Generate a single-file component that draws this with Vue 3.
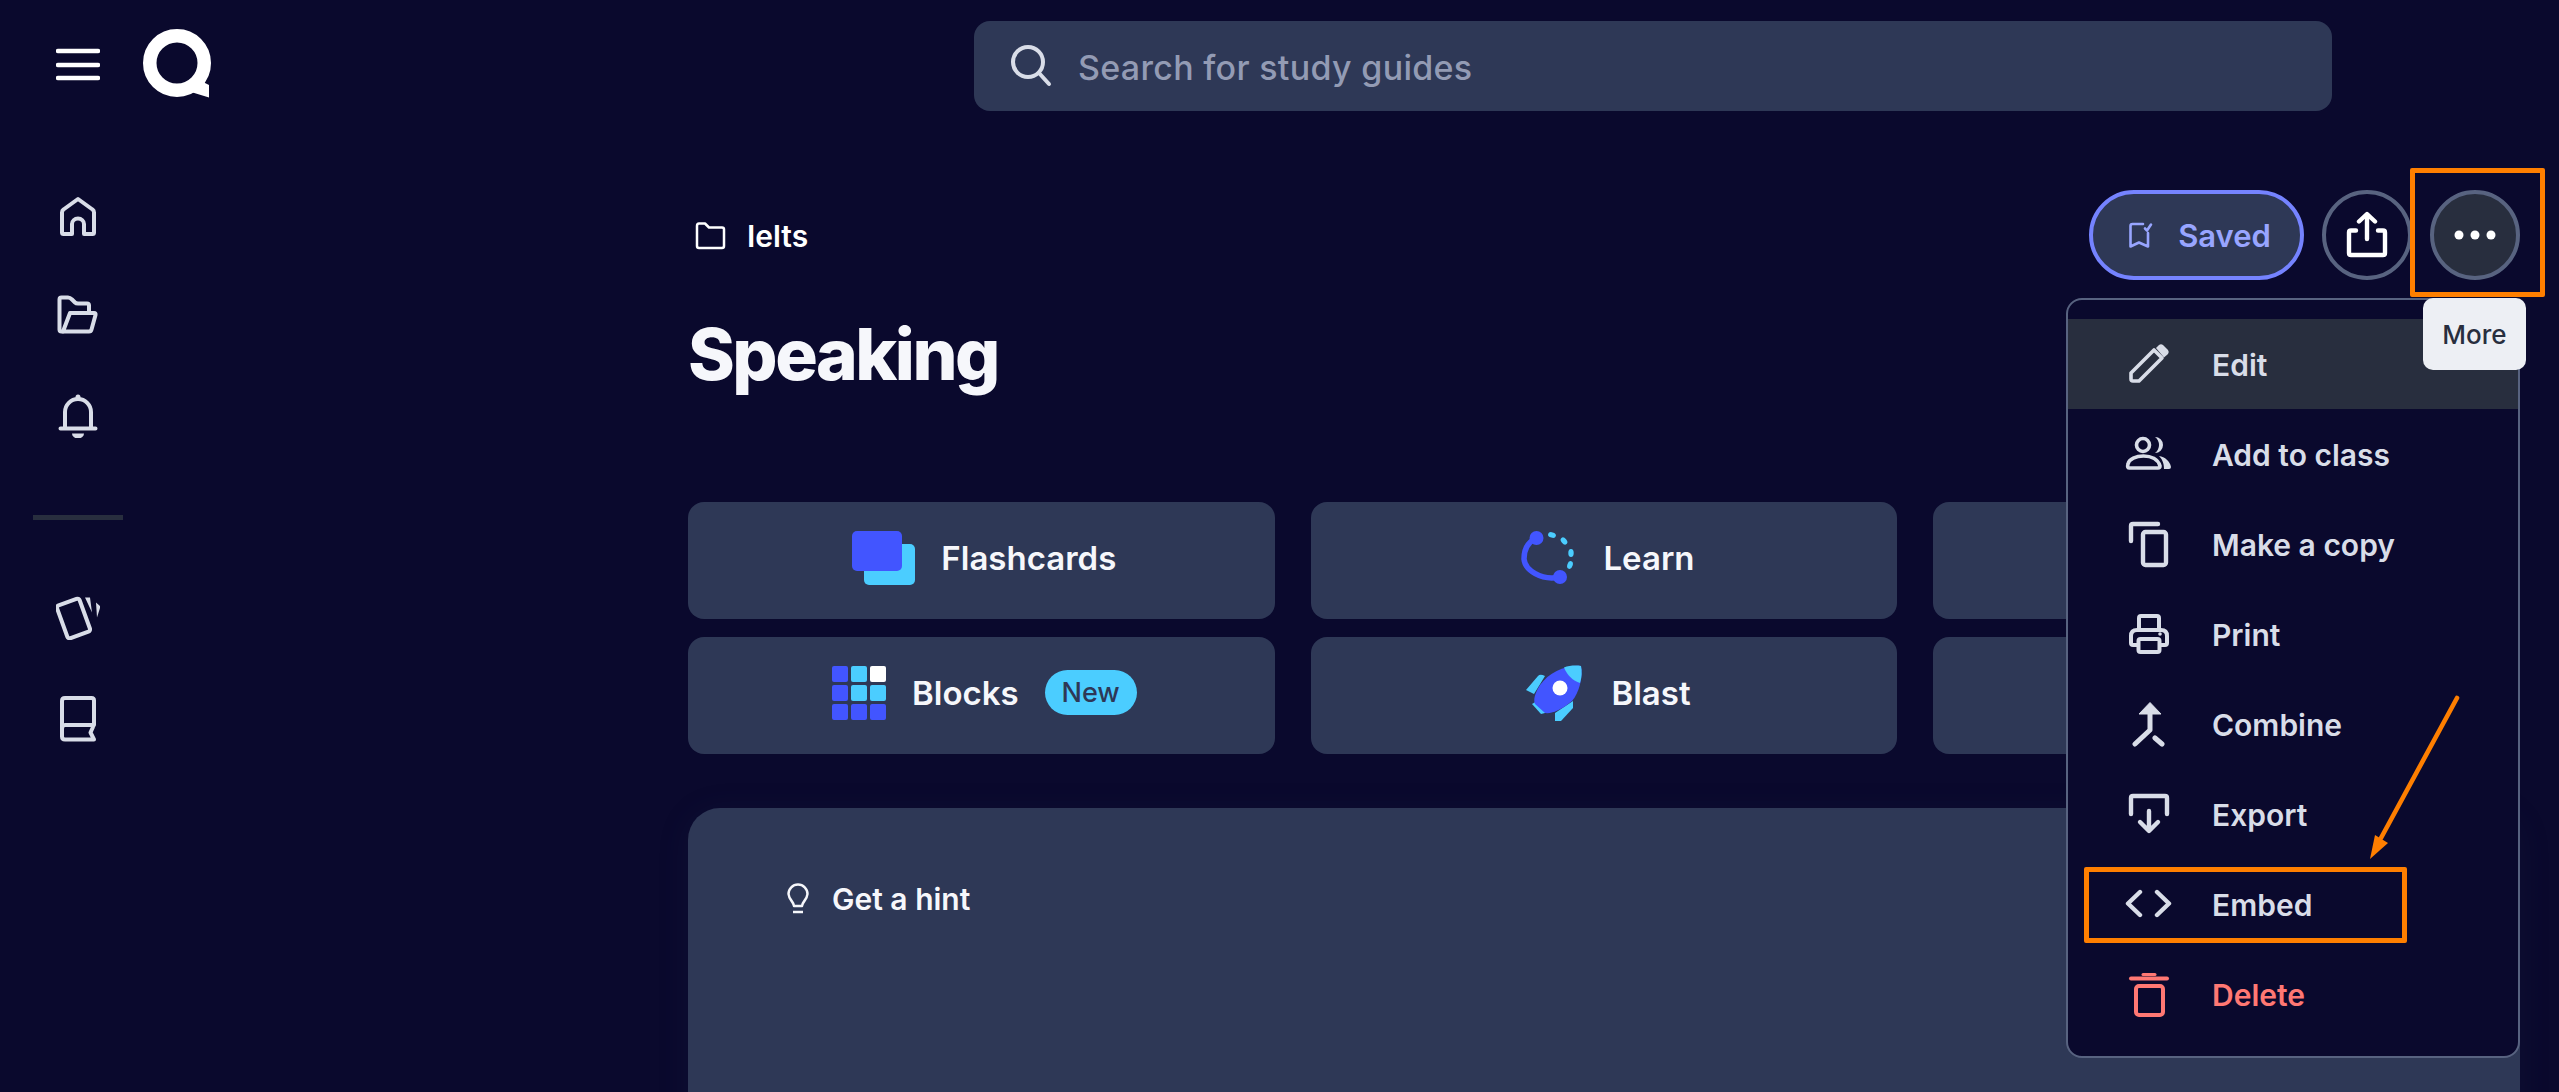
<script setup>
const blockCells = ['b', 'c', 'w', 'b', 'c', 'c', 'b', 'b', 'b']
</script>

<template>
  <div class="page">
    <header class="topbar">
      <svg class="burger" width="44" height="44" viewBox="0 0 44 44"><path d="M2 8H42M2 22H42M2 35H42" fill="none" stroke="#fff" stroke-width="4.4" stroke-linecap="round"/></svg>
      <svg class="logo" width="72" height="72" viewBox="0 0 72 72"><circle cx="36" cy="36" r="27.25" fill="none" stroke="#fff" stroke-width="13.5"/><path d="M50 65L68 70.5V58L64 56 60 48Z" fill="#fff"/></svg>
      <div class="search">
        <svg width="44" height="44" viewBox="0 0 44 44"><circle cx="18" cy="18" r="15" fill="none" stroke="#d9dde8" stroke-width="4"/><path d="M29 29L39 40" stroke="#d9dde8" stroke-width="4" stroke-linecap="round"/></svg>
        <span>Search for study guides</span>
      </div>
    </header>

    <div class="layout">
      <nav class="sidebar">
        <div class="slot">
          <svg width="44" height="44" viewBox="0 0 44 44" class="nav-icon"><path d="M22 4L7.5 14.5Q6 15.5 6 17.5V37.5Q6 39 7.5 39H16V29A6 5.5 0 0 1 28 29V39H36.5Q38 39 38 37.5V17.5Q38 15.5 36.5 14.5Z"/></svg>
        </div>
        <div class="slot">
          <svg width="44" height="44" viewBox="0 0 44 44" class="nav-icon"><path d="M7 37.5H5.5Q3.5 37.5 3.5 35.5V5.5Q3.5 3.5 5.5 3.5H12Q14 3.5 16 5.5L19 8.5Q20 9.5 22 9.5H31Q33 9.5 33 11.5V17"/><path d="M14 19H38Q40 19 39.5 21L35.5 35.5Q35 37.5 33 37.5H7Z"/></svg>
        </div>
        <div class="slot">
          <svg width="44" height="44" viewBox="0 0 44 44" class="nav-icon"><path d="M4.5 34.5H39.5M9 34.5V18A13 13 0 0 1 35 18V34.5"/><circle cx="22" cy="3" r="2.5" fill="#d9dde8" stroke="none"/><path d="M16 39.5H28A6 5 0 0 1 16 39.5Z" fill="#d9dde8" stroke="none"/></svg>
        </div>
        <div class="divider"></div>
        <div class="slot">
          <svg width="44" height="44" viewBox="0 0 44 44" class="nav-icon"><rect x="5.5" y="5" width="24" height="35" rx="2.5" transform="rotate(-20 17.5 22.5)"/><path d="M29 1.5L34 1.5 36 16.5ZM40 6.5L44.5 10.5 41 21.5Z" fill="#d9dde8" stroke="none"/></svg>
        </div>
        <div class="slot">
          <svg width="44" height="48" viewBox="0 0 44 48" class="nav-icon book"><path d="M9 31H38V6.5Q38 4 35.5 4H9Q6 4 6 7V42.5Q6 45.5 9 45.5H38L34.5 38.5 37 33M6 35Q6 31 9 31"/></svg>
        </div>
      </nav>

      <main class="content">
        <section class="head">
          <div class="head-left">
            <div class="crumb">
              <svg width="36" height="32" viewBox="0 0 36 32"><path d="M4 6Q4 3.5 6 3.5H12L16 7.5H29Q31 7.5 31 9.5V26Q31 28 29 28H6Q4 28 4 26Z" fill="none" stroke="#fff" stroke-width="2.5" stroke-linejoin="round"/></svg>
              <span>Ielts</span>
            </div>
            <h1>Speaking</h1>
          </div>

          <div class="actions">
            <button class="saved">
              <svg width="28" height="30" viewBox="0 0 28 30"><path d="M15 4H4.5Q2.5 4 2.5 6V26.5L11 22.5 20 26.5V13M17 8.5L19 10.5 23 4.5" fill="none" stroke="#98a5ff" stroke-width="2.6" stroke-linejoin="round" stroke-linecap="round"/></svg>
              <span>Saved</span>
            </button>
            <button class="round">
              <svg width="44" height="48" viewBox="0 0 44 48"><path d="M11 19.5H6Q4 19.5 4 21.5V42Q4 44 6 44H38Q40 44 40 42V21.5Q40 19.5 38 19.5H33M22 28V4M14 10.5L22 3 30 10.5" fill="none" stroke="#fff" stroke-width="4.4" stroke-linecap="round" stroke-linejoin="round"/></svg>
            </button>
            <button class="round more">
              <svg width="44" height="12" viewBox="0 0 44 12"><circle cx="6" cy="6" r="4.5" fill="#fff"/><circle cx="22" cy="6" r="4.5" fill="#fff"/><circle cx="38" cy="6" r="4.5" fill="#fff"/></svg>
            </button>

            <div class="menu">
              <div class="item active">
                <svg width="44" height="44" viewBox="0 0 44 44"><path d="M4 37V31L27 8 35 16 12 39H6Q4 39 4 37Z" fill="none" stroke="#d9dde8" stroke-width="3.6" stroke-linejoin="round"/><path d="M29 6L32 3Q34 1.5 36 3L41 8Q42.5 10 41 12L37 15.5Z" fill="#d9dde8"/></svg>
                <span>Edit</span>
              </div>
              <div class="item">
                <svg width="50" height="38" viewBox="0 0 50 38"><circle cx="19" cy="10" r="6.5" fill="none" stroke="#d9dde8" stroke-width="3.6"/><path d="M31 2A8 8 0 0 1 31 18 10 10 0 0 0 31 2Z" fill="#d9dde8"/><path d="M4 29C5 24 12 21 19.5 21 27 21 34 24 36 31Q36 33 34 33H5Q3 33 4 29Z" fill="none" stroke="#d9dde8" stroke-width="3.6" stroke-linejoin="round"/><path d="M35 21C41 22 46 26 47 32Q47 34 45 34H40C40 28 38 24 35 21Z" fill="#d9dde8"/></svg>
                <span>Add to class</span>
              </div>
              <div class="item">
                <svg width="44" height="48" viewBox="0 0 44 48" fill="none" stroke="#d9dde8" stroke-width="4.4" stroke-linecap="round"><path d="M4 21V6Q4 4 6 4H31"/><rect x="16" y="12" width="23" height="33" rx="2.5"/></svg>
                <span>Make a copy</span>
              </div>
              <div class="item">
                <svg width="44" height="44" viewBox="0 0 44 44" fill="none" stroke="#d9dde8" stroke-width="4" stroke-linejoin="round"><path d="M12 33H6Q4 33 4 31V24Q4 18 10 18H34Q40 18 40 24V31Q40 33 38 33H32"/><path d="M12 17V6Q12 4 14 4H30Q32 4 32 6V17"/><rect x="11.5" y="27" width="21" height="13" rx="2"/><circle cx="33" cy="22" r="1.8" fill="#d9dde8" stroke="none"/></svg>
                <span>Print</span>
              </div>
              <div class="item">
                <svg width="44" height="46" viewBox="0 0 44 46"><path d="M23 1.5L34 13H12Z" fill="#d9dde8" stroke="#d9dde8" stroke-linejoin="round"/><path d="M23 13V29L8 43M28 37L35 43" fill="none" stroke="#d9dde8" stroke-width="5" stroke-linecap="round" stroke-linejoin="round"/></svg>
                <span>Combine</span>
              </div>
              <div class="item">
                <svg width="44" height="44" viewBox="0 0 44 44" fill="none" stroke="#d9dde8" stroke-width="4.4" stroke-linecap="round" stroke-linejoin="round"><path d="M4 22V6Q4 4 6 4H38Q40 4 40 6V22"/><path d="M22 19V38M13 30L22 39 31 30"/></svg>
                <span>Export</span>
              </div>
              <div class="item">
                <svg width="50" height="30" viewBox="0 0 50 30" fill="none" stroke="#d9dde8" stroke-width="4.4" stroke-linecap="round" stroke-linejoin="round"><path d="M16 3L4 14.5 16 26M33 3L45 14.5 33 26"/></svg>
                <span>Embed</span>
              </div>
              <div class="item danger">
                <svg width="44" height="48" viewBox="0 0 44 48" fill="none" stroke="#ff7873" stroke-width="4" stroke-linecap="round"><path d="M4 8.5H40"/><path d="M16 4.5H28" stroke-width="3"/><rect x="9" y="16" width="27" height="29" rx="3"/></svg>
                <span>Delete</span>
              </div>
            </div>

            <div class="tooltip">More</div>
            <div class="mark mark-more"></div>
          </div>
        </section>

        <section class="tiles">
          <div class="tile">
            <svg width="63" height="54" viewBox="0 0 63 54"><rect x="12" y="13" width="51" height="41" rx="5" fill="#4bcdff"/><rect width="50" height="40" rx="5" fill="#4255ff"/></svg>
            <span>Flashcards</span>
          </div>
          <div class="tile">
            <svg width="58" height="58" viewBox="0 0 58 58"><path d="M17.5 9C9 13 5 21 5 30 6 41 22 52 41 48" fill="none" stroke="#4255ff" stroke-width="5.5"/><circle cx="17.5" cy="9" r="7" fill="#4255ff"/><circle cx="41" cy="48" r="7" fill="#4255ff"/><ellipse cx="33" cy="6" rx="4" ry="2.7" fill="#4bcdff" transform="rotate(15 33 6)"/><ellipse cx="45" cy="12" rx="4" ry="2.7" fill="#4bcdff" transform="rotate(50 45 12)"/><ellipse cx="52" cy="24" rx="2.7" ry="4" fill="#4bcdff"/><ellipse cx="51" cy="36" rx="2.7" ry="4" fill="#4bcdff" transform="rotate(18 51 36)"/></svg>
            <span>Learn</span>
          </div>
          <div class="tile"></div>
          <div class="tile">
            <div class="blocks">
              <i v-for="(c, i) in blockCells" :key="i" :class="c"></i>
            </div>
            <span>Blocks</span>
            <em class="badge">New</em>
          </div>
          <div class="tile">
            <svg width="62" height="60" viewBox="0 0 62 60"><path d="M3 27L15 13Q17 10.5 22 13L11 31Z" fill="#4bcdff"/><path d="M9 41L14 38 24 49.5 18 51Z" fill="#4bcdff"/><path d="M32 50L50 38V45L38 58H32Z" fill="#4bcdff"/><path d="M58 3C45 1 26 9 17 22 12 30 10 37 12 41L22 50C29 51 40 46 49 38 56 30 60 15 58 3Z" fill="#4255ff"/><path d="M58 3C53 2 46 2.5 41 4.5 44 12 50 18 57 20 59 14 59 8 58 3Z" fill="#4bcdff"/><circle cx="37" cy="25" r="7.5" fill="#fff"/></svg>
            <span>Blast</span>
          </div>
          <div class="tile"></div>
        </section>

        <section class="card">
          <div class="hint">
            <svg width="28" height="32" viewBox="0 0 28 32"><path d="M9 23C9 19 4 17 3.5 11A9.5 9.5 0 0 1 22.5 11C22 17 17 19 17 23H9Z" fill="none" stroke="#f6f7fb" stroke-width="2.5" stroke-linejoin="round"/><path d="M8 29H18" stroke="#f6f7fb" stroke-width="2.5"/></svg>
            <span>Get a hint</span>
          </div>
        </section>
      </main>
    </div>

    <div class="mark mark-embed"></div>
    <svg class="arrow" width="100" height="170" viewBox="0 0 100 170"><path d="M94 3L18 143" fill="none" stroke="#ff7f00" stroke-width="4.6" stroke-linecap="round"/><path d="M7 164L12 140 25 148Z" fill="#ff7f00"/></svg>
  </div>
</template>

<style>
html, body {
  margin: 0;
  background: #0a092d;
}
</style>

<style scoped>
.page {
  position: relative;
  width: 2559px;
  height: 1092px;
  overflow: hidden;
  background: #0a092d;
  font-family: Inter, Lato, sans-serif;
  color: #f6f7fb;
}
.topbar {
  display: flex;
  align-items: flex-start;
  box-sizing: border-box;
  height: 132px;
  padding: 21px 0 0 56px;
}
.burger {
  margin-top: 22px;
}
.logo {
  margin: 6px 0 0 41px;
}
.search {
  display: flex;
  align-items: center;
  gap: 24px;
  box-sizing: border-box;
  width: 1358px;
  height: 90px;
  margin-left: 761px;
  padding-left: 36px;
  border-radius: 16px;
  background: #2e3856;
  color: #939bb4;
  font-size: 34px;
  font-weight: 500;
  letter-spacing: 0.3px;
}
.search span {
  padding-top: 2px;
}
.layout {
  display: flex;
}
.sidebar {
  display: flex;
  flex-direction: column;
  align-items: center;
  flex: none;
  box-sizing: border-box;
  width: 156px;
  padding-top: 35px;
}
.slot {
  display: flex;
  align-items: center;
  justify-content: center;
  height: 99.5px;
}
.divider {
  width: 90px;
  height: 5px;
  margin: 49px 0;
  background: #282e3e;
}
.nav-icon {
  fill: none;
  stroke: #d9dde8;
  stroke-width: 4;
  stroke-linejoin: round;
  stroke-linecap: round;
}
.content {
  flex: 1;
  min-width: 0;
  padding: 0 39px 0 532px;
}
.head {
  display: flex;
  justify-content: space-between;
  align-items: flex-start;
  box-sizing: border-box;
  height: 370px;
  padding-top: 58px;
}
.head-left {
  display: flex;
  flex-direction: column;
}
.crumb {
  display: flex;
  align-items: center;
  gap: 18px;
  margin: 28px 0 0 5px;
  font-size: 30px;
  font-weight: 600;
  color: #fff;
}
.head h1 {
  margin: 55px 0 0;
  font-size: 71px;
  line-height: 90px;
  font-weight: 800;
  letter-spacing: -2.5px;
}
.actions {
  position: relative;
  display: flex;
  gap: 18px;
}
.actions button {
  display: flex;
  align-items: center;
  justify-content: center;
  box-sizing: border-box;
  height: 90px;
  padding: 0;
  border-radius: 45px;
  font-family: inherit;
}
.saved {
  gap: 22px;
  width: 215px;
  border: 4px solid #7583ff;
  background: #2e3856;
  color: #98a5ff;
  font-size: 31px;
  font-weight: 600;
}
.saved svg {
  margin-left: 6px;
}
.round {
  width: 90px;
  border: 4px solid #586380;
  background: transparent;
}
.round.more {
  background: #282e3e;
}
.menu {
  position: absolute;
  top: 108px;
  right: 0;
  box-sizing: border-box;
  width: 454px;
  height: 760px;
  padding: 19px 0;
  border: 2px solid #586380;
  border-radius: 16px;
  background: #0a092d;
  z-index: 2;
}
.item {
  position: relative;
  display: flex;
  align-items: center;
  height: 90px;
  padding-left: 144px;
  color: #d9dde8;
  font-size: 30px;
  font-weight: 600;
}
.item span {
  padding-top: 1px;
}
.item svg {
  position: absolute;
  left: 81px;
  top: 50%;
  transform: translate(-50%, -50%);
}
.item.active {
  background: #282e3e;
}
.item.danger {
  color: #ff7873;
}
.tooltip {
  position: absolute;
  top: 108px;
  right: -6px;
  display: flex;
  align-items: center;
  justify-content: center;
  width: 103px;
  height: 72px;
  border-radius: 10px;
  background: #edeff4;
  color: #282e3e;
  font-size: 26px;
  font-weight: 500;
  z-index: 3;
}
.mark {
  position: absolute;
  box-sizing: border-box;
  border: 5px solid #ff7f00;
  border-radius: 2px;
  z-index: 4;
}
.mark-more {
  top: -22px;
  left: 321px;
  width: 135px;
  height: 129px;
}
.mark-embed {
  left: 2084px;
  top: 867px;
  width: 323px;
  height: 76px;
}
.arrow {
  position: absolute;
  left: 2363px;
  top: 695px;
  z-index: 4;
}
.tiles {
  display: grid;
  grid-template-columns: repeat(3, 1fr);
  grid-auto-rows: 117px;
  gap: 18px 36px;
}
.tile {
  display: flex;
  align-items: center;
  justify-content: center;
  gap: 26px;
  box-sizing: border-box;
  padding: 0 0 6px 6px;
  border-radius: 16px;
  background: #2e3856;
  color: #f6f7fb;
  font-size: 33px;
  font-weight: 600;
}
.blocks {
  display: grid;
  grid-template-columns: repeat(3, 16px);
  grid-auto-rows: 16px;
  gap: 3px;
}
.blocks i {
  border-radius: 2px;
}
.blocks .b {
  background: #4255ff;
}
.blocks .c {
  background: #4bcdff;
}
.blocks .w {
  background: #fff;
}
.badge {
  display: flex;
  align-items: center;
  justify-content: center;
  width: 92px;
  height: 45px;
  border-radius: 23px;
  background: #4bcdff;
  color: #2e3856;
  font-size: 27px;
  font-style: normal;
  font-weight: 500;
}
.card {
  box-sizing: border-box;
  height: 600px;
  margin-top: 54px;
  padding: 73px 97px;
  border-radius: 32px;
  background: #2e3856;
  box-shadow: 0 4px 32px rgba(46, 56, 86, 0.14);
}
.hint {
  display: flex;
  align-items: center;
  gap: 19px;
  font-size: 30px;
  font-weight: 600;
}
</style>
